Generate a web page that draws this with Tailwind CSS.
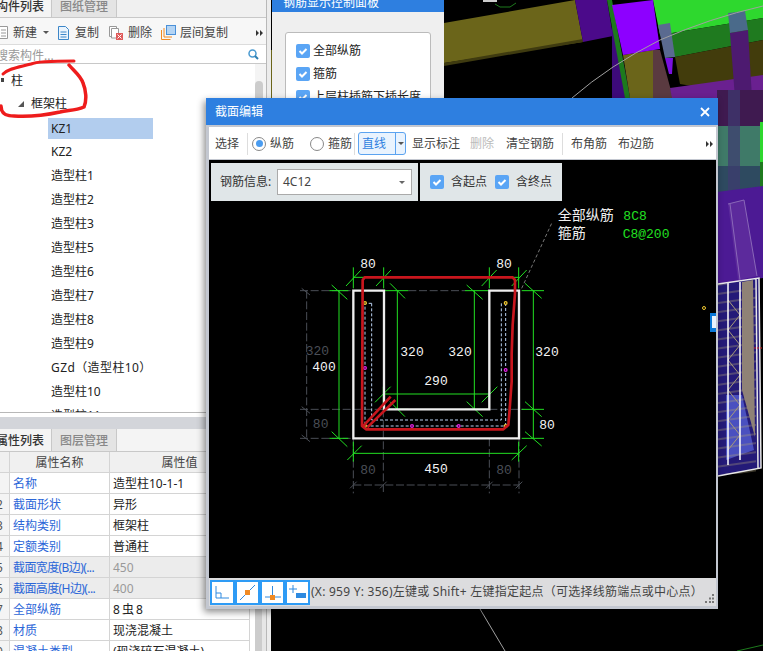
<!DOCTYPE html>
<html lang="en">
<head>
    <meta charset="UTF-8">
    <title>截面编辑</title>
    <script src="https://cdn.jsdelivr.net/npm/@tailwindcss/browser@4"></script>
</head>
<body class="bg-black">
<div class="relative w-[763px] h-[651px] overflow-hidden bg-black text-[12px] text-[#333] font-['Noto_Sans','Noto_Sans_CJK_SC',sans-serif]">

    <!-- 3D scene behind the windows -->
    <svg class="absolute inset-0" width="763" height="651" viewBox="0 0 763 651">
        <defs>
            <pattern id="hatch" width="42" height="9" patternUnits="userSpaceOnUse" patternTransform="rotate(-8)">
                <line x1="0" y1="4" x2="42" y2="4" stroke="#a89c78" stroke-width="1"/>
            </pattern>
        </defs>
        <polygon points="444,23 575,0 583,42 444,63" fill="#6b651a"/>
        <polygon points="444,63 583,39 583,42 444,66" fill="#3f3b10"/>
        <polygon points="271,50 274,50 274,105 271,105" fill="#6b651a"/>
        <polygon points="575,0 607,0 613,36 583,42" fill="#4b0a8a"/>
        <polygon points="612,14 622,55 630,98 612,98" fill="#3d0a7a"/>
        <polygon points="607,0 612,0 630,98 625,98" fill="#1d7a1d"/>
        <polygon points="623,55 653,50 653,98 630,98" fill="#6b651a"/>
        <polygon points="653,0 763,0 763,18 660,35" fill="#2ed82e"/>
        <polygon points="660,35 763,18 763,40 675,57" fill="#1f7a1f"/>
        <polygon points="675,57 763,40 763,98 680,84" fill="#423c0c"/>
        <polygon points="653,50 660,50 673,98 653,98" fill="#5a3a40"/>
        <polygon points="670,88 763,75 763,98 672,98" fill="#6a2090"/>
        <polygon points="658,25 670,23 675,57 665,58" fill="#5a6a90"/>
        <polygon points="665,58 673,58 672,74 669,74" fill="#7a10e0"/>
        <polygon points="728,13 745,11 748,30 730,33" fill="#4a6a8a"/>
        <polygon points="730,33 748,30 752,98 735,98" fill="#4d1a70"/>
        <polygon points="612,5 653,0 660,49 623,55" fill="#8d00ff"/>
        <path d="M495,4 l5,3 l10,0 l6,-4" stroke="#1d7a1d" fill="none"/>
        <rect x="483" y="0" width="14" height="2" fill="#ccc"/>
        <rect x="717" y="90" width="46" height="36" fill="#3f1a50"/>
        <rect x="717" y="126" width="46" height="40" fill="#3f7a68"/>
        <rect x="717" y="166" width="46" height="26" fill="#2e4a60"/>
        <rect x="728" y="90" width="12" height="102" fill="#3e3a70" opacity="0.7"/>
        <rect x="760" y="122" width="3" height="40" fill="#2ed82e"/>
        <rect x="760" y="162" width="3" height="30" fill="#1f7a1f"/>
        <polygon points="717,192 763,186 763,278 717,284" fill="#4c1a94"/>
        <polygon points="728,204 744,200 757,276 738,280" fill="#5c2a9c"/>
        <path d="M728,204L744,200L757,276M730,204L740,280" stroke="#8a68b8" fill="none"/>
        <polygon points="718,284 759,278 761,468 718,476" fill="#241a78"/>
        <polygon points="726,395 742,395 754,450 726,460" fill="#4a50c0"/>
        <rect x="718" y="284" width="38" height="190" fill="url(#hatch)" opacity="0.7"/>
        <path d="M728,300L740,315L728,330L740,345L728,360L740,375L728,390L740,405L728,420L740,435L728,450" stroke="#a89c78" fill="none"/>
        <polygon points="742,282 753,280 755,437 742,390" fill="#8f8276"/>
        <path d="M728,283V465M740,282V460" stroke="#fff" stroke-width="1.5" fill="none"/>
        <path d="M718,284L759,278L761,468L718,476M756,279L758,468" stroke="#e8e8e8" stroke-width="1.5" fill="none"/>
        <path d="M572,98Q610,65 660,40Q710,18 763,6" stroke="#a0a0a0" stroke-width="1" fill="none"/>
        <path d="M480,609L505,651" stroke="#a0a0a0" stroke-width="1" fill="none"/>
        <path d="M737,651L763,645" stroke="#1d7a1d" stroke-width="1" fill="none"/>
        <path d="M754,348h9" stroke="#d02020" stroke-width="1" stroke-dasharray="2 1" fill="none"/>
    </svg>

    <!-- left dock: component list and properties -->
    <div class="absolute left-0 top-0 flex h-[651px]">
        <div class="w-[267px] h-full bg-white border-r border-[#b8b8b8] flex flex-col overflow-hidden">
            <div class="h-[18px] shrink-0 flex bg-[#f0f0f0] border-b border-[#c8c8c8]">
                <div class="w-[52px] bg-[#f4f4f4] border-r border-[#c8c8c8] overflow-hidden whitespace-nowrap font-medium leading-[14px]"><span class="-ml-[4px] inline-block">构件列表</span></div>
                <div class="w-[65px] bg-[#e4e4e4] border-r border-[#c8c8c8] text-center text-[#888] font-medium leading-[14px]">图纸管理</div>
            </div>
            <div class="h-[27px] shrink-0 flex items-center pt-[3px] bg-[#f7f7f7] border-b border-[#dcdcdc] text-[#444]">
                <svg class="w-[8px] h-[13px] shrink-0" viewBox="0 0 8 13"><path d="M0,.5H7.5V12.5H0M1,4H6M1,7H6M1,10H6" fill="#fff" stroke="#999"/></svg>
                <span class="ml-[5px] w-[24px] whitespace-nowrap">新建</span>
                <span class="ml-[6px] w-0 h-0 border-x-[3px] border-x-transparent border-t-[3px] border-t-[#555]"></span>
                <svg class="ml-[8px] w-[13px] h-[14px] shrink-0" viewBox="0 0 13 14"><path d="M1.5,.5H8.5L11.5,3.5V13.5H1.5ZM3.5,6H9.5M3.5,8.5H9.5M3.5,11H9.5" fill="#eaf4fd" stroke="#3c86c8"/></svg>
                <span class="ml-[5px] whitespace-nowrap">复制</span>
                <svg class="ml-[10px] w-[14px] h-[14px] shrink-0" viewBox="0 0 14 14"><path d="M.5,.5H7.5V10.5H.5Z" fill="#fff" stroke="#999"/><path d="M2.5,2.5H9.5V12H2.5Z" fill="#fff" stroke="#999"/><rect x="7" y="7" width="7" height="7" fill="#e05a5a"/><path d="M8.5,8.5L12.5,12.5M12.5,8.5L8.5,12.5" stroke="#fff"/></svg>
                <span class="ml-[5px] whitespace-nowrap">删除</span>
                <svg class="ml-[9px] w-[15px] h-[15px] shrink-0" viewBox="0 0 15 15"><path d="M.5,5V14.5H9.5M3,3V12H11" fill="none" stroke="#f08a24"/><rect x="5.5" y=".5" width="9" height="9" fill="#b4d4f4" stroke="#4a90d8"/></svg>
                <span class="ml-[4px] whitespace-nowrap">层间复制</span>
                <svg class="ml-[28px] w-[7px] h-[6px]" viewBox="0 0 7 6"><path d="M0,0L3,3L0,6ZM4,0L7,3L4,6Z" fill="#333"/></svg>
            </div>
            <div class="h-[19px] shrink-0 flex items-center justify-between border-b border-[#c8c8c8] overflow-hidden text-[#999]">
                <span class="-ml-[4px] pt-[3px] whitespace-nowrap">搜索构件...</span>
                <svg class="mr-[7px] w-[11px] h-[11px]" viewBox="0 0 11 11"><circle cx="4.5" cy="4.5" r="3.5" fill="none" stroke="#4a9ad0" stroke-width="1.5"/><path d="M7,7L10,10" stroke="#2f7fb0" stroke-width="2"/></svg>
            </div>

            <div class="h-[348px] shrink-0 flex overflow-hidden">
                <div class="w-[255px] pt-[4px] text-[#222]">
                    <div class="h-[24px] flex items-center"><span class="ml-[1px] w-[3px] h-[4px] bg-[#444]"></span><span class="ml-[7px] pt-[2px]">柱</span></div>
                    <div class="h-[24px] flex items-center"><span class="ml-[18px] w-0 h-0 border-l-[6px] border-l-transparent border-b-[6px] border-b-[#555]"></span><span class="ml-[7px]">框架柱</span></div>
                    <div class="h-[24px] flex items-center"><span class="ml-[48px] w-[105px] h-[21px] pl-[3px] leading-[21px] bg-[#b2cdee]">KZ1</span></div>
                    <div class="h-[24px] leading-[24px] pl-[51px]">KZ2</div>
                    <div class="h-[24px] leading-[24px] pl-[51px]">造型柱1</div>
                    <div class="h-[24px] leading-[24px] pl-[51px]">造型柱2</div>
                    <div class="h-[24px] leading-[24px] pl-[51px]">造型柱3</div>
                    <div class="h-[24px] leading-[24px] pl-[51px]">造型柱5</div>
                    <div class="h-[24px] leading-[24px] pl-[51px]">造型柱6</div>
                    <div class="h-[24px] leading-[24px] pl-[51px]">造型柱7</div>
                    <div class="h-[24px] leading-[24px] pl-[51px]">造型柱8</div>
                    <div class="h-[24px] leading-[24px] pl-[51px]">造型柱9</div>
                    <div class="h-[24px] leading-[24px] pl-[51px] tracking-[0.4px]">GZd（造型柱10）</div>
                    <div class="h-[24px] leading-[24px] pl-[51px]">造型柱10</div>
                    <div class="h-[24px] leading-[24px] pl-[51px]">造型柱11</div>
                </div>
                <div class="w-[11px] bg-[#f4f4f4] pt-[17px]">
                    <div class="w-[8px] h-[120px] bg-[#cccccc] rounded-t-[4px]"></div>
                </div>
            </div>

            <div class="h-[17px] shrink-0 border-t border-[#b8b8b8] bg-white">
                <div class="mt-[4px] h-[12px] bg-[#d3d5da]"></div>
            </div>

            <div class="h-[23px] shrink-0 flex bg-[#f4f4f4] border-b border-[#c8c8c8]">
                <div class="w-[52px] border-r border-[#c8c8c8] overflow-hidden whitespace-nowrap font-medium leading-[23px]"><span class="-ml-[4px] inline-block">属性列表</span></div>
                <div class="w-[65px] bg-[#e4e4e4] border-r border-[#c8c8c8] text-center text-[#888] font-medium leading-[23px]">图层管理</div>
            </div>

            <div class="flex flex-1 min-h-0">
                <div class="w-[250px] grid grid-cols-[10px_100px_140px] auto-rows-[21px] leading-[22px]">
                    <div class="bg-[#f0f0f0] border-b border-r border-[#d4d4d4]"></div>
                    <div class="bg-[#f0f0f0] border-b border-r border-[#d4d4d4] text-center text-[#444]">属性名称</div>
                    <div class="bg-[#f0f0f0] border-b border-r border-[#d4d4d4] text-center text-[#444]">属性值</div>

                    <div class="bg-[#f4f4f4] border-b border-r border-[#d4d4d4] overflow-hidden"><span class="-ml-[5px] inline-block text-[#555]">1</span></div>
                    <div class="border-b border-r border-[#d4d4d4] pl-[3px] text-[#2b66d8] whitespace-nowrap">名称</div>
                    <div class="border-b border-r border-[#d4d4d4] pl-[3px] text-[#222]">造型柱10-1-1</div>

                    <div class="bg-[#f4f4f4] border-b border-r border-[#d4d4d4] overflow-hidden"><span class="-ml-[4px] inline-block text-[#555]">2</span></div>
                    <div class="border-b border-r border-[#d4d4d4] pl-[3px] text-[#2b66d8] whitespace-nowrap">截面形状</div>
                    <div class="border-b border-r border-[#d4d4d4] pl-[3px] text-[#222]">异形</div>

                    <div class="bg-[#f4f4f4] border-b border-r border-[#d4d4d4] overflow-hidden"><span class="-ml-[4px] inline-block text-[#555]">3</span></div>
                    <div class="border-b border-r border-[#d4d4d4] pl-[3px] text-[#2b66d8] whitespace-nowrap">结构类别</div>
                    <div class="border-b border-r border-[#d4d4d4] pl-[3px] text-[#222]">框架柱</div>

                    <div class="bg-[#f4f4f4] border-b border-r border-[#d4d4d4] overflow-hidden"><span class="-ml-[4px] inline-block text-[#555]">4</span></div>
                    <div class="border-b border-r border-[#d4d4d4] pl-[3px] text-[#2b66d8] whitespace-nowrap">定额类别</div>
                    <div class="border-b border-r border-[#d4d4d4] pl-[3px] text-[#222]">普通柱</div>

                    <div class="bg-[#f4f4f4] border-b border-r border-[#d4d4d4] overflow-hidden"><span class="-ml-[4px] inline-block text-[#555]">5</span></div>
                    <div class="bg-[#ececec] border-b border-r border-[#d4d4d4] pl-[3px] text-[#2b66d8] whitespace-nowrap overflow-hidden tracking-[-0.6px]">截面宽度(B边)(...</div>
                    <div class="bg-[#ececec] border-b border-r border-[#d4d4d4] pl-[3px] text-[#999]">450</div>

                    <div class="bg-[#f4f4f4] border-b border-r border-[#d4d4d4] overflow-hidden"><span class="-ml-[4px] inline-block text-[#555]">6</span></div>
                    <div class="bg-[#ececec] border-b border-r border-[#d4d4d4] pl-[3px] text-[#2b66d8] whitespace-nowrap overflow-hidden tracking-[-0.6px]">截面高度(H边)(...</div>
                    <div class="bg-[#ececec] border-b border-r border-[#d4d4d4] pl-[3px] text-[#999]">400</div>

                    <div class="bg-[#f4f4f4] border-b border-r border-[#d4d4d4] overflow-hidden"><span class="-ml-[4px] inline-block text-[#555]">7</span></div>
                    <div class="border-b border-r border-[#d4d4d4] pl-[3px] text-[#2b66d8] whitespace-nowrap">全部纵筋</div>
                    <div class="border-b border-r border-[#d4d4d4] pl-[3px] text-[#222]">8<span class="mx-[2px]">⾍</span>8</div>

                    <div class="bg-[#f4f4f4] border-b border-r border-[#d4d4d4] overflow-hidden"><span class="-ml-[4px] inline-block text-[#555]">8</span></div>
                    <div class="border-b border-r border-[#d4d4d4] pl-[3px] text-[#2b66d8] whitespace-nowrap">材质</div>
                    <div class="border-b border-r border-[#d4d4d4] pl-[3px] text-[#222]">现浇混凝土</div>

                    <div class="bg-[#f4f4f4] border-b border-r border-[#d4d4d4] overflow-hidden"><span class="-ml-[4px] inline-block text-[#555]">9</span></div>
                    <div class="border-b border-r border-[#d4d4d4] pl-[3px] text-[#2b66d8] whitespace-nowrap">混凝土类型</div>
                    <div class="border-b border-r border-[#d4d4d4] pl-[3px] text-[#222] whitespace-nowrap overflow-hidden">(现浇碎石混凝土)</div>
                </div>
                <div class="ml-[5px] w-[7px] bg-[#cccccc]"></div>
                <div class="flex-1 bg-[#e6e6e6]"></div>
            </div>
        </div>
        <div class="w-[4px] h-full bg-[#ececec]"></div>
    </div>

    <!-- red freehand mark over the tree -->
    <svg class="absolute left-0 top-0" width="100" height="125" viewBox="0 0 100 125">
        <path d="M74,61C58,61 38,61 31,64C20,67 9,68 3,74" fill="none" stroke="#ee1c1c" stroke-width="3" stroke-linecap="round"/>
        <path d="M69,65C74,71 81,76 83,83C86,90 87,100 84,107C75,111 68,110 60,112C46,115 30,117 14,116C5,116 1,113 1,106" fill="none" stroke="#ee1c1c" stroke-width="3.5" stroke-linecap="round"/>
    </svg>

    <!-- rebar display panel, mostly behind the section editor -->
    <div class="absolute left-[272px] top-0 w-[172px] h-[100px] bg-[#efefef] overflow-hidden">
        <div class="h-[12px] bg-[#2e7fe0] text-white pl-[11px] leading-[6px] whitespace-nowrap">钢筋显示控制面板</div>
        <div class="mt-[20px] mx-[13px] h-[100px] bg-white border border-[#bbbbbb] rounded-[3px] pl-[10px] pt-[11px] flex flex-col gap-[9px] text-[#222]">
            <div class="flex items-center gap-[3px] h-[14px]">
                <svg class="w-[14px] h-[14px]" viewBox="0 0 14 14"><rect width="14" height="14" rx="2" fill="#5aa5f5"/><path d="M3.5,7L6,9.5L10.5,5" fill="none" stroke="#fff" stroke-width="2"/></svg>
                <span>全部纵筋</span>
            </div>
            <div class="flex items-center gap-[3px] h-[14px]">
                <svg class="w-[14px] h-[14px]" viewBox="0 0 14 14"><rect width="14" height="14" rx="2" fill="#5aa5f5"/><path d="M3.5,7L6,9.5L10.5,5" fill="none" stroke="#fff" stroke-width="2"/></svg>
                <span>箍筋</span>
            </div>
            <div class="flex items-center gap-[3px] h-[14px] whitespace-nowrap">
                <svg class="w-[14px] h-[14px]" viewBox="0 0 14 14"><rect width="14" height="14" rx="2" fill="#5aa5f5"/><path d="M3.5,7L6,9.5L10.5,5" fill="none" stroke="#fff" stroke-width="2"/></svg>
                <span>上层柱插筋下插长度</span>
            </div>
        </div>
    </div>

    <!-- section editor dialog -->
    <div class="absolute left-[206px] top-[98px] w-[512px] h-[511px] bg-[#c3c7d0] flex flex-col shadow-[-2px_3px_7px_rgba(0,0,0,0.45)]">
        <div class="h-[27px] shrink-0 bg-[#2e7fe0] flex items-center justify-between pl-[9px] pr-[8px] text-white">
            <span>截面编辑</span>
            <svg class="w-[10px] h-[10px]" viewBox="0 0 10 10"><path d="M1,1L9,9M9,1L1,9" stroke="#fff" stroke-width="1.8"/></svg>
        </div>
        <div class="flex-1 min-h-0 flex flex-col pt-[2px] pl-[3px] pr-[2px] pb-[3px]">
            <div class="h-[32px] shrink-0 bg-white flex items-center whitespace-nowrap text-[#444] leading-[20px] pt-[1px]">
                <span class="ml-[6px] w-[24px]">选择</span>
                <span class="ml-[8px] w-px h-[22px] bg-[#ddd]"></span>
                <span class="ml-[4px] w-[14px] h-[14px] rounded-full border border-[#888] flex items-center justify-center"><span class="w-[7px] h-[7px] rounded-full bg-[#4a9cf0]"></span></span>
                <span class="ml-[4px] w-[24px]">纵筋</span>
                <span class="ml-[16px] w-[14px] h-[14px] rounded-full border border-[#888]"></span>
                <span class="ml-[4px] w-[24px]">箍筋</span>
                <span class="ml-[2px] w-px h-[22px] bg-[#ddd]"></span>
                <div class="ml-[3px] w-[48px] h-[23px] bg-[#e9f3fe] border border-[#5ba3f0] rounded-[3px] flex text-[#2e7fe0]">
                    <span class="w-[37px] pl-[3px] leading-[21px] border-r border-[#5ba3f0]">直线</span>
                    <span class="flex-1 flex items-center justify-center"><span class="w-0 h-0 border-x-[3px] border-x-transparent border-t-[3px] border-t-[#555]"></span></span>
                </div>
                <span class="ml-[6px] w-[48px]">显示标注</span>
                <span class="ml-[10px] w-[24px] text-[#bbb]">删除</span>
                <span class="ml-[12px] w-[48px]">清空钢筋</span>
                <span class="ml-[8px] w-px h-[22px] bg-[#ddd]"></span>
                <span class="ml-[8px] w-[36px]">布角筋</span>
                <span class="ml-[11px] w-[36px]">布边筋</span>
                <svg class="ml-[52px] w-[7px] h-[6px]" viewBox="0 0 7 6"><path d="M0,0L3,3L0,6ZM4,0L7,3L4,6Z" fill="#333"/></svg>
            </div>
            <div class="flex-1 min-h-0 mt-[1px] bg-black relative">
                <div class="absolute left-[2px] top-[3px] flex gap-[2px] h-[38px]">
                    <div class="w-[207px] bg-[#e0e6e8] flex items-center pl-[9px] text-[#333]">
                        <span class="w-[52px] whitespace-nowrap">钢筋信息:</span>
                        <div class="ml-[5px] w-[135px] h-[26px] bg-white border border-[#aaaaaa] flex items-center justify-between pl-[5px] pr-[6px]">
                            <span class="text-[#444]">4C12</span>
                            <span class="w-0 h-0 border-x-[3px] border-x-transparent border-t-[3px] border-t-[#666]"></span>
                        </div>
                    </div>
                    <div class="w-[142px] bg-[#e0e6e8] flex items-center pl-[10px] text-[#333]">
                        <svg class="w-[14px] h-[14px]" viewBox="0 0 14 14"><rect width="14" height="14" rx="2" fill="#5aa5f5"/><path d="M3.5,7L6,9.5L10.5,5" fill="none" stroke="#fff" stroke-width="2"/></svg>
                        <span class="ml-[7px] w-[36px] whitespace-nowrap">含起点</span>
                        <svg class="ml-[8px] w-[14px] h-[14px]" viewBox="0 0 14 14"><rect width="14" height="14" rx="2" fill="#5aa5f5"/><path d="M3.5,7L6,9.5L10.5,5" fill="none" stroke="#fff" stroke-width="2"/></svg>
                        <span class="ml-[7px] w-[36px] whitespace-nowrap">含终点</span>
                    </div>
                </div>

                <!-- section drawing, units are 1/3 px -->
                <svg class="absolute inset-0" width="507" height="418" viewBox="-243 -120 1521 1254" font-family="'Liberation Mono',monospace">
                    <g fill="none" stroke="#4a4e56" stroke-width="3" stroke-dasharray="24 8">
                        <path d="M30,272H190M355,272H525M50,272V715M30,628H280M598,628H700M30,715H190"/>
                        <path d="M190,715V880M280,628V880M598,715V880M687,715V880M190,855H687"/>
                    </g>
                    <path d="M35,265L60,285M35,620L60,640M35,705L60,725M180,865L200,845M270,865L290,845M588,865L608,845M677,865L697,845" stroke="#4a4e56" stroke-width="3" fill="none"/>
                    <g fill="none" stroke="#22e022" stroke-width="3">
                        <path d="M190,760H687M190,725V785M686,725V785M172,780L215,737M665,780L710,737"/>
                        <path d="M147,272V715M118,272H175M118,715H175M125,255L172,298M125,695L172,740"/>
                        <path d="M322,272V628M282,272H355M282,628H355M300,250L345,295M300,605L345,650"/>
                        <path d="M553,272V628M525,272H598M525,628H598M530,255L578,298M530,605L578,650"/>
                        <path d="M280,582H598M280,560V630M598,560V630M255,607L302,560M575,607L622,560"/>
                        <path d="M730,272V715M695,272H762M695,628H762M695,715H762M705,250L755,295M705,605L755,650M705,695L755,738"/>
                        <path d="M190,232H282M190,202V265M281,202V265M168,258L213,210M258,258L303,210"/>
                        <path d="M598,232H686M598,202V265M686,202V265M575,258L620,210M665,258L710,210"/>
                    </g>
                    <path d="M190,272H282V628H598V272H687V715H190Z" fill="none" stroke="#eeeeee" stroke-width="7"/>
                    <path d="M245,310H225V678H647V310M245,310V660H634V310" fill="none" stroke="#b8d0f0" stroke-width="3" stroke-dasharray="9 6"/>
                    <path d="M695,265L785,70" fill="none" stroke="#777" stroke-width="3" stroke-dasharray="10 7"/>
                    <g fill="#000" stroke-width="4">
                        <circle cx="225" cy="309" r="4" stroke="#f0c830"/>
                        <circle cx="647" cy="309" r="4" stroke="#f0c830"/>
                        <circle cx="225" cy="678" r="4" stroke="#f0c830"/>
                        <circle cx="647" cy="678" r="4" stroke="#f0c830"/>
                        <circle cx="225" cy="504" r="4" stroke="#e020e0"/>
                        <circle cx="647" cy="510" r="4" stroke="#e020e0"/>
                        <circle cx="366" cy="678" r="4" stroke="#e020e0"/>
                        <circle cx="506" cy="678" r="4" stroke="#e020e0"/>
                    </g>
                    <path d="M224,232H668L675,240V280L668,375L665,460V545L658,640L655,675L640,688H228L216,678L218,240Z" fill="none" stroke="#c8161d" stroke-width="8" stroke-linejoin="round"/>
                    <path d="M218,680L302,590M232,682L316,600" fill="none" stroke="#c8161d" stroke-width="8"/>
                    <g font-size="39" fill="#f4f4f4" text-anchor="middle">
                        <text x="234" y="203">80</text>
                        <text x="642" y="203">80</text>
                        <text x="366" y="468">320</text>
                        <text x="510" y="468">320</text>
                        <text x="438" y="555">290</text>
                        <text x="102" y="513">400</text>
                        <text x="771" y="468">320</text>
                        <text x="771" y="686">80</text>
                        <text x="438" y="820">450</text>
                    </g>
                    <g font-size="39" fill="#4a4e56" text-anchor="middle">
                        <text x="82" y="466">320</text>
                        <text x="92" y="684">80</text>
                        <text x="234" y="822">80</text>
                        <text x="642" y="822">80</text>
                    </g>
                    <g font-size="42" fill="#f0f0f0" font-family="'Noto Sans CJK SC',sans-serif">
                        <text x="803" y="60">全部纵筋</text>
                        <text x="803" y="115">箍筋</text>
                    </g>
                    <g font-size="39" fill="#22e022">
                        <text x="1000" y="60">8C8</text>
                        <text x="998" y="113">C8@200</text>
                    </g>
                </svg>
                <svg class="absolute left-[492px] top-[144px]" width="15" height="30" viewBox="0 0 15 30">
                    <circle cx="3" cy="4" r="1.5" fill="#000" stroke="#f0c830" stroke-width="1"/>
                    <rect x="9" y="9" width="6" height="19" fill="#0a78d8"/>
                    <rect x="11" y="12" width="4" height="12" fill="#e8f2fd"/>
                </svg>
            </div>
            <div class="h-[28px] shrink-0 bg-[#dcdcde] flex items-center relative">
                <div class="flex ml-[1px]">
                    <div class="w-[25px] h-[25px] border-2 border-[#2e9bf5] bg-white">
                        <svg width="21" height="21" viewBox="0 0 21 21"><path d="M4,4V16H17M4,11H9V16" fill="none" stroke="#2e8ae0"/></svg>
                    </div>
                    <div class="w-[25px] h-[25px] border-2 border-[#2e9bf5] bg-white">
                        <svg width="21" height="21" viewBox="0 0 21 21"><path d="M3,18L18,3" fill="none" stroke="#2e8ae0"/><rect x="8" y="8" width="5" height="5" fill="#f08a24"/></svg>
                    </div>
                    <div class="w-[25px] h-[25px] border-2 border-[#2e9bf5] bg-white">
                        <svg width="21" height="21" viewBox="0 0 21 21"><path d="M3,15H19M10.500,4V15" fill="none" stroke="#2e8ae0"/><rect x="8" y="13" width="5" height="5" fill="#f08a24"/></svg>
                    </div>
                    <div class="w-[25px] h-[25px] border-2 border-[#2e9bf5] bg-white">
                        <svg width="21" height="21" viewBox="0 0 21 21"><path d="M2,7H10M6,3V11" fill="none" stroke="#2e8ae0"/><rect x="9" y="11" width="10" height="5" fill="#2e8ae0"/></svg>
                    </div>
                </div>
                <span class="ml-[1px] whitespace-nowrap text-[#444] tracking-[0.25px]">(X: 959 Y: 356)左键或 Shift+ 左键指定起点（可选择线筋端点或中心点）</span>
                <svg class="absolute right-[1px] bottom-[2px]" width="10" height="10" viewBox="0 0 10 10"><path d="M7,0h2v2h-2zM4,3.500h2v2h-2zM7,3.500h2v2h-2zM0,7h2v2h-2zM4,7h2v2h-2zM7,7h2v2h-2z" fill="#777"/></svg>
            </div>
        </div>
    </div>
</div>
</body>
</html>
